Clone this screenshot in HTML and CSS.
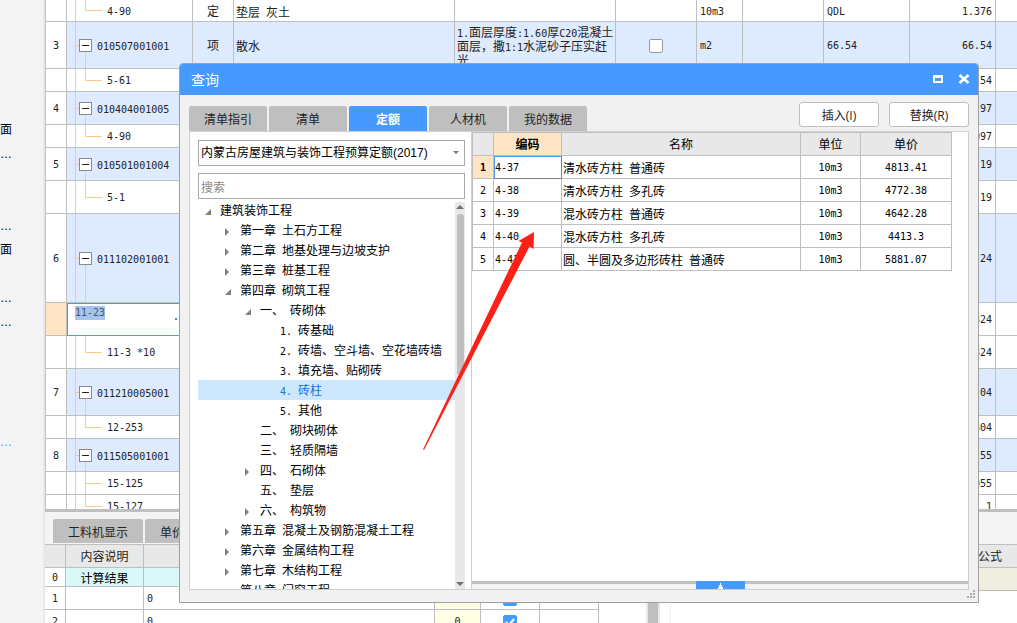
FILE: index.html
```html
<!DOCTYPE html>
<html lang="zh-CN">
<head>
<meta charset="utf-8">
<title>查询</title>
<link rel="stylesheet" href="styles.css">
</head>
<body>
<div class="app">
  <aside class="side">
    <ul class="side-list">
      <li>面</li><li>…</li><li></li><li></li><li>…</li><li>面</li><li></li><li>…</li><li>…</li><li></li><li></li><li></li><li></li><li class="link">…</li>
    </ul>
  </aside>

  <main class="main">
    <section class="upper">
      <table class="bill">
        <colgroup><col class="b-no"><col class="b-code"><col class="b-kind"><col class="b-name"><col class="b-desc"><col class="b-check"><col class="b-unit"><col class="b-rate"><col class="b-expr"><col class="b-qty"><col></colgroup>
        <tbody>
        <tr class="r22"><td></td><td class="leaf">4-90</td><td class="mid">定</td><td class="zh">垫层<span class="n"> </span>灰土</td><td></td><td></td><td>10m3</td><td></td><td>QDL</td><td class="right">1.376</td><td></td></tr>
        <tr class="r47 item"><td class="mid">3</td><td class="group"><button class="fold" aria-label="折叠"></button>010507001001</td><td class="mid">项</td><td class="zh">散水</td><td class="desc"><span class="n">1.</span>面层厚度<span class="n">:1.60</span>厚<span class="n">C20</span>混凝土<br>面层，撒<span class="n">1:1</span>水泥砂子压实赶<br>光</td><td class="mid"><input class="tick" type="checkbox" aria-label="主要清单"></td><td>m2</td><td></td><td>66.54</td><td class="right">66.54</td><td></td></tr>
        <tr class="r23"><td></td><td class="leaf">5-61</td><td></td><td></td><td></td><td></td><td></td><td></td><td></td><td class="right">.54</td><td></td></tr>
        <tr class="r33 item"><td class="mid">4</td><td class="group"><button class="fold" aria-label="折叠"></button>010404001005</td><td></td><td></td><td></td><td></td><td></td><td></td><td></td><td class="right">97</td><td></td></tr>
        <tr class="r23"><td></td><td class="leaf">4-90</td><td></td><td></td><td></td><td></td><td></td><td></td><td></td><td class="right">097</td><td></td></tr>
        <tr class="r33 item"><td class="mid">5</td><td class="group"><button class="fold" aria-label="折叠"></button>010501001004</td><td></td><td></td><td></td><td></td><td></td><td></td><td></td><td class="right">19</td><td></td></tr>
        <tr class="r33"><td></td><td class="leaf">5-1</td><td></td><td></td><td></td><td></td><td></td><td></td><td></td><td class="right">19</td><td></td></tr>
        <tr class="r89 item"><td class="mid">6</td><td class="group"><button class="fold" aria-label="折叠"></button>011102001001</td><td></td><td></td><td></td><td></td><td></td><td></td><td></td><td class="right">24</td><td></td></tr>
        <tr class="r33"><td class="current"></td><td class="editing"><div class="editor"><input class="code-input" aria-label="编码" value="11-23"><svg class="dots" width="12" height="2" viewBox="0 0 12 2"><path d="M0 0h2v2H0zM5 0h2v2H5zM10 0h2v2H10z" fill="#3d8ec9"/></svg></div></td><td></td><td></td><td></td><td></td><td></td><td></td><td></td><td class="right">324</td><td></td></tr>
        <tr class="r33"><td></td><td class="leaf">11-3 *10</td><td></td><td></td><td></td><td></td><td></td><td></td><td></td><td class="right">324</td><td></td></tr>
        <tr class="r47 item"><td class="mid">7</td><td class="group"><button class="fold" aria-label="折叠"></button>011210005001</td><td></td><td></td><td></td><td></td><td></td><td></td><td></td><td class="right">04</td><td></td></tr>
        <tr class="r23"><td></td><td class="leaf">12-253</td><td></td><td></td><td></td><td></td><td></td><td></td><td></td><td class="right">304</td><td></td></tr>
        <tr class="r33 item"><td class="mid">8</td><td class="group"><button class="fold" aria-label="折叠"></button>011505001001</td><td></td><td></td><td></td><td></td><td></td><td></td><td></td><td class="right">55</td><td></td></tr>
        <tr class="r23"><td></td><td class="leaf more">15-125</td><td></td><td></td><td></td><td></td><td></td><td></td><td></td><td class="right">055</td><td></td></tr>
        <tr class="r23"><td></td><td class="leaf">15-127</td><td></td><td></td><td></td><td></td><td></td><td></td><td></td><td class="right">1</td><td></td></tr>
        </tbody>
      </table>
    </section>

    <section class="lower">
      <div class="lower-tabs"><button class="tab wide">工料机显示</button><button class="tab">单价构成</button></div>
      <div class="lower-body">
        <div class="lower-left">
          <table class="calc">
            <colgroup><col class="c-no"><col class="c-name"><col class="c-text"><col class="c-val"><col class="c-check"><col class="c-last"></colgroup>
            <tbody>
            <tr class="calc-head"><th></th><th>内容说明</th><th></th><th></th><th></th><th></th></tr>
            <tr class="result"><td class="mid">0</td><td class="mid zh">计算结果</td><td></td><td></td><td></td><td></td></tr>
            <tr class="r23"><td class="mid">1</td><td></td><td>0</td><td class="cream"></td><td class="mid"><input class="tick" type="checkbox" aria-label="第1行" checked></td><td></td></tr>
            <tr class="r23"><td class="mid">2</td><td></td><td>0</td><td class="mid cream">0</td><td class="mid"><input class="tick" type="checkbox" aria-label="第2行" checked></td><td></td></tr>
            </tbody>
          </table>
        </div>
        <div class="vbar"></div>
        <div class="formula"><div class="formula-head">公式</div><div class="formula-cell"></div></div>
      </div>
    </section>
  </main>
</div>

<div class="dialog" role="dialog" aria-label="查询">
  <header class="title">
    <span class="title-text">查询</span>
    <button class="win" aria-label="最大化"><svg width="12" height="12" viewBox="0 0 12 12"><path d="M1 1h10v8H1zM3 4v3h6V4z" fill="#fff" fill-rule="evenodd"/></svg></button>
    <button class="win" aria-label="关闭"><svg width="12" height="12" viewBox="0 0 12 12"><path d="M1.500 1 10.500 9M10.500 1 1.500 9" stroke="#fff" stroke-width="2.600"/></svg></button>
  </header>
  <div class="bar">
    <nav class="tabs"><button class="tab">清单指引</button><button class="tab">清单</button><button class="tab active">定额</button><button class="tab">人材机</button><button class="tab">我的数据</button></nav>
    <div class="actions"><button class="act">插入(I)</button><button class="act">替换(R)</button></div>
  </div>
  <div class="panel">
    <section class="picker">
      <select class="field combo" aria-label="定额库"><option>内蒙古房屋建筑与装饰工程预算定额(2017)</option></select>
      <input class="field search" type="text" placeholder="搜索" aria-label="搜索">
      <div class="tree-wrap">
        <ul class="tree">
          <li class="l0 open">建筑装饰工程</li>
          <li class="l1 shut">第一章<span class="n"> </span>土石方工程</li>
          <li class="l1 shut">第二章<span class="n"> </span>地基处理与边坡支护</li>
          <li class="l1 shut">第三章<span class="n"> </span>桩基工程</li>
          <li class="l1 open">第四章<span class="n"> </span>砌筑工程</li>
          <li class="l2 open">一、<span class="n"> </span>砖砌体</li>
          <li class="l3"><span class="n">1. </span>砖基础</li>
          <li class="l3"><span class="n">2. </span>砖墙、空斗墙、空花墙砖墙</li>
          <li class="l3"><span class="n">3. </span>填充墙、贴砌砖</li>
          <li class="l3 selected"><span class="n">4. </span>砖柱</li>
          <li class="l3"><span class="n">5. </span>其他</li>
          <li class="l2">二、<span class="n"> </span>砌块砌体</li>
          <li class="l2">三、<span class="n"> </span>轻质隔墙</li>
          <li class="l2 shut">四、<span class="n"> </span>石砌体</li>
          <li class="l2">五、<span class="n"> </span>垫层</li>
          <li class="l2 shut">六、<span class="n"> </span>构筑物</li>
          <li class="l1 shut">第五章<span class="n"> </span>混凝土及钢筋混凝土工程</li>
          <li class="l1 shut">第六章<span class="n"> </span>金属结构工程</li>
          <li class="l1 shut">第七章<span class="n"> </span>木结构工程</li>
          <li class="l1">第八章<span class="n"> </span>门窗工程</li>
        </ul>
        <div class="scroll">
          <svg width="10" height="10" viewBox="0 0 10 10"><path d="M1 7 5 3 9 7z" fill="#6d7178"/></svg>
          <div class="track"><div class="thumb"></div></div>
          <svg width="10" height="10" viewBox="0 0 10 10"><path d="M1 3h8L5 7z" fill="#6d7178"/></svg>
        </div>
      </div>
    </section>
    <section class="results">
      <div class="grid-area">
        <table class="quota">
          <colgroup><col class="q-no"><col class="q-code"><col><col class="q-unit"><col class="q-price"></colgroup>
          <thead><tr><th></th><th class="sorted">编码</th><th>名称</th><th>单位</th><th>单价</th></tr></thead>
          <tbody>
          <tr><td class="mid row-on">1</td><td class="focus">4-37</td><td class="zh">清水砖方柱<span class="n"> </span>普通砖</td><td class="mid">10m3</td><td class="mid">4813.41</td></tr>
          <tr><td class="mid">2</td><td>4-38</td><td class="zh">清水砖方柱<span class="n"> </span>多孔砖</td><td class="mid">10m3</td><td class="mid">4772.38</td></tr>
          <tr><td class="mid">3</td><td>4-39</td><td class="zh">混水砖方柱<span class="n"> </span>普通砖</td><td class="mid">10m3</td><td class="mid">4642.28</td></tr>
          <tr><td class="mid">4</td><td>4-40</td><td class="zh">混水砖方柱<span class="n"> </span>多孔砖</td><td class="mid">10m3</td><td class="mid">4413.3</td></tr>
          <tr><td class="mid">5</td><td>4-41</td><td class="zh">圆、半圆及多边形砖柱<span class="n"> </span>普通砖</td><td class="mid">10m3</td><td class="mid">5881.07</td></tr>
          </tbody>
        </table>
      </div>
      <div class="splitter"><button class="expand" aria-label="展开"><svg width="5" height="6" viewBox="0 0 5 6"><path d="M2 0h1v2h1v2h1v2H0V4h1V2h1z" fill="#fff"/></svg></button></div>
    </section>
  </div>
  <footer class="foot"><svg width="8" height="8" viewBox="0 0 8 8"><path d="M6 0h2v2H6zM3 3h2v2H3zM6 3h2v2H6zM0 6h2v2H0zM3 6h2v2H3zM6 6h2v2H6z" fill="#aaa"/></svg></footer>
  <svg class="pointer" width="113" height="220" viewBox="422 231 113 220"><path d="M423 449.500 522 242.500 518.500 241 534 232 533.500 249 529.500 246.500 424 450z" fill="#ff2015"/></svg>
</div>
</body>
</html>
```

FILE: styles.css
```css
* { box-sizing: border-box; }
body {
  margin: 0;
  height: 100vh;
  overflow: hidden;
  position: relative;
  font-family: "Noto Sans CJK SC", sans-serif;
  font-size: 12px;
  color: #222;
  background: #fff;
}
button, input, select { font: inherit; color: inherit; margin: 0; }
button { padding: 0; border: 0; background: none; }
ul { list-style: none; margin: 0; padding: 0; }

.n, td { font-family: "DejaVu Sans Mono", "Noto Sans CJK SC", monospace; font-size: 10px; }
.n { white-space: pre; line-height: 1; }
td.zh, td.desc { font-family: "Noto Sans CJK SC", sans-serif; font-size: 12px; }

.app { display: flex; height: 100%; }
.side {
  flex: 0 0 45px;
  padding-top: 118px;
  background: #f4f4f4;
  border-right: 2px solid #e9e9e9;
  color: #000;
  overflow: hidden;
}
.side-list li { height: 24px; line-height: 24px; font-family: "Liberation Sans", "Noto Sans CJK SC", sans-serif; }
.side-list .link { color: #4599ff; }
.main { flex: 1; min-width: 0; display: flex; flex-direction: column; }

table { border-collapse: separate; border-spacing: 0; table-layout: fixed; }
th, td {
  padding: 0 3px;
  text-align: left;
  font-weight: normal;
  line-height: 14px;
  white-space: nowrap;
  border: 0 solid #bfbfbf;
  border-width: 0 1px 1px 0;
}
td { padding-top: 2px; }
td.mid { text-align: center; padding: 2px 0 0; }
td.right { text-align: right; }
.r22 { height: 22px; }
.r23 { height: 23px; }
.r33 { height: 33px; }
.r47 { height: 47px; }
.r89 { height: 89px; }

.upper { flex: 1; min-height: 0; overflow: hidden; border-left: 1px solid #bfbfbf; border-bottom: 3px solid #bfbfbf; }
.bill { width: 100%; }
.bill td:last-child { border-right: 0; }
.b-no { width: 21px; }
.b-code { width: 126px; }
.b-kind { width: 41px; }
.b-name { width: 221px; }
.b-desc { width: 161px; }
.b-check { width: 81px; }
.b-unit { width: 46px; }
.b-rate { width: 81px; }
.b-expr, .b-qty { width: 86px; }
.bill td:nth-child(3) { font-size: 12px; }
.bill .zh, .bill .desc { padding: 2px 2px 0; }
.item td:not(:first-child) { background-color: #deeafe; }
.leaf, .group { background-repeat: no-repeat; --c: linear-gradient(#ffc97f, #ffc97f); }
.bill .leaf {
  padding-left: 40px;
  background-image: var(--c), var(--c), var(--c);
  background-position: 8px 0, 18px 0, 18px 50%;
  background-size: 1px 100%, 1px 50%, 17px 1px;
}
.bill .leaf.more { background-size: 1px 100%, 1px 100%, 17px 1px; }
.bill .group {
  padding-left: 12px;
  background-image: var(--c), var(--c), var(--c);
  background-position: 8px 0, 18px 100%, 8px 50%;
  background-size: 1px 100%, 1px 50%, 5px 1px;
}
.fold {
  width: 13px;
  height: 13px;
  margin: 0 5px 2px 0;
  vertical-align: middle;
  border: 1px solid #8a8a8a;
  background: linear-gradient(#222, #222) center / 7px 1px no-repeat #fff;
}
.current { background: #ffe5c5; }
.bill .editing { padding: 0; border-color: #4599ff; box-shadow: inset 1px 0 #4599ff, inset 0 1px #4599ff; }
.editor { display: flex; align-items: center; justify-content: space-between; padding: 0 5px 0 8px; height: 32px; }
.code-input { align-self: flex-start; width: 30px; height: 14px; margin-top: 3px; padding: 0; border: 0; background: #a3c4ef; color: #555; }

.tick {
  appearance: none;
  display: inline-block;
  width: 14px;
  height: 14px;
  vertical-align: middle;
  border: 1px solid #999;
  border-radius: 2px;
  background: #fff;
}
.tick:checked {
  border-color: #4599ff;
  background: url("data:image/svg+xml,%3Csvg xmlns='http://www.w3.org/2000/svg' viewBox='0 0 12 12'%3E%3Cpath d='M2 6l3 3 5-6' fill='none' stroke='white' stroke-width='2'/%3E%3C/svg%3E") #4599ff;
}

.lower { flex: 0 0 111px; display: flex; flex-direction: column; overflow: hidden; background: #fff; }
.lower-tabs { flex: 0 0 33px; display: flex; gap: 2px; padding: 7px 0 1px 8px; background: #f4f4f4; border-bottom: 1px solid #bfbfbf; }
.tab { width: 78px; background: #bfbfbf; border-radius: 2px 2px 0 0; color: #222; }
.tab.wide { width: 90px; }
.lower-body { flex: 1; display: flex; }
.lower-left { flex: 1; }
.calc { width: 554px; }
.calc td, .calc td.mid { padding-top: 1px; }
.c-no { width: 21px; }
.c-name { width: 78px; }
.c-text { width: 291px; }
.c-val { width: 46px; }
.c-check, .c-last { width: 59px; }
.calc-head { height: 23px; }
.calc-head th { background: #e8e8e8; text-align: center; }
.result { height: 19px; }
.result td:not(:first-child) { background: #d9f8f8; color: #000; }
.cream { background: #ffffe6; }
.vbar { flex: 0 0 14px; background: #bfbfbf; border: 2px solid #e8e8e8; border-width: 0 2px; }
.formula { flex: 0 0 347px; margin-left: 10px; border-left: 1px solid #f0f0f0; }
.formula-head { height: 23px; padding: 0 15px 0 0; line-height: 22px; background: #e8e8e8; border-bottom: 1px solid #bfbfbf; text-align: right; }
.formula-cell { height: 23px; background: #efeedf; border-bottom: 1px solid #bfbfbf; }

.dialog {
  position: absolute;
  top: 63px;
  right: 38px;
  bottom: 20px;
  left: 179px;
  display: flex;
  flex-direction: column;
  background: #f1f1f1;
  border: 1px solid #a0a0a0;
  border-radius: 4px 4px 0 0;
}
.title { flex: 0 0 31px; display: flex; align-items: center; gap: 14px; padding: 0 8px 0 11px; background: #4599ff; border-radius: 3px 3px 0 0; color: #fff; }
.title-text { flex: 1; font-size: 14px; line-height: 20px; padding-bottom: 2px; }
.win { width: 12px; height: 12px; }
.win svg { display: block; }
.bar { flex: 0 0 36px; display: flex; justify-content: space-between; align-items: flex-end; padding: 0 9px; }
.tabs { display: flex; gap: 2px; height: 25px; }
.tab.active { background: #4599ff; color: #fff; font-weight: bold; }
.actions { display: flex; gap: 10px; padding-bottom: 4px; }
.act { width: 80px; height: 25px; background: #fff; border: 1px solid #bfbfbf; border-radius: 3px; font-family: "Open Sans", "Noto Sans CJK SC", sans-serif; }
.panel { flex: 1; min-height: 0; display: flex; margin: 0 9px; border: 1px solid #d0d0d0; background: #fff; color: #000; }
.picker { flex: 0 0 282px; display: flex; flex-direction: column; padding: 8px 6px 0 8px; border-right: 1px solid #d0d0d0; }
.field { flex: none; width: 267px; height: 26px; border: 1px solid #a9a9a9; border-radius: 0; background: #fff; padding: 0 2px; }
.combo {
  appearance: none;
  margin-bottom: 7px;
  font-family: "Liberation Sans", "Noto Sans CJK SC", sans-serif;
  background: url("data:image/svg+xml,%3Csvg xmlns='http://www.w3.org/2000/svg' width='6' height='4'%3E%3Cpath d='M0 0h6L3 3z' fill='%23777'/%3E%3C/svg%3E") right 5px center no-repeat #fff;
}
.search::placeholder { color: #888; opacity: 1; }
.tree-wrap { flex: 1; min-height: 0; display: flex; padding-top: 1px; }
.tree { flex: 1; overflow: hidden; }
.tree li { height: 20px; line-height: 20px; white-space: nowrap; background-repeat: no-repeat; }
.tree .l0 { padding-left: 22px; background-position: 6px 8px; }
.tree .l1 { padding-left: 42px; background-position: 26px 8px; }
.tree .l2 { padding-left: 62px; background-position: 46px 8px; }
.tree .l3 { padding-left: 82px; }
.open { background-image: url("data:image/svg+xml,%3Csvg xmlns='http://www.w3.org/2000/svg' width='8' height='8'%3E%3Cpath d='M1 7h6V1z' fill='%23808080'/%3E%3C/svg%3E"); }
.shut { background-image: url("data:image/svg+xml,%3Csvg xmlns='http://www.w3.org/2000/svg' width='8' height='8'%3E%3Cpath d='M1 0l4 4-4 4z' fill='%23808080'/%3E%3C/svg%3E"); }
.tree .selected { background: #cce8ff; color: #1670e0; }
.scroll { flex: 0 0 10px; display: flex; flex-direction: column; margin-top: 2px; background: #e8e8e8; }
.scroll svg { display: block; flex: none; }
.track { flex: 1; padding: 2px 1px 0 2px; }
.thumb { height: 44%; border-radius: 3px; background: #bfbfbf; }

.results { flex: 1; min-width: 0; display: flex; flex-direction: column; }
.grid-area { flex: 1; padding-right: 16px; }
.quota { width: 100%; border-top: 1px solid #bfbfbf; border-left: 1px solid #bfbfbf; }
.q-no { width: 21px; }
.q-code { width: 68px; }
.q-unit { width: 60px; }
.q-price { width: 91px; }
.quota tr { height: 23px; }
.quota th { background: #e8e8e8; text-align: center; }
.quota th.sorted { background: #ffe5c5; font-weight: bold; }
.quota td { padding: 2px 1px 0; }
.quota .row-on { background: #ffe5c5; font-weight: bold; }
.quota .focus { box-shadow: inset 0 1px #4599ff, inset 1px 0 #4599ff; border-color: #808080; }
.splitter { flex: 0 0 8px; display: flex; justify-content: center; background: #f4f4f4; box-shadow: inset 0 3px #bfbfbf; }
.expand { width: 49px; background: #4599ff; }
.expand svg { display: block; margin: 1px auto 0; }
.foot { flex: 0 0 12px; display: flex; justify-content: flex-end; padding: 0 3px 0 0; }
.pointer { position: absolute; left: 242px; top: 167px; }
```
